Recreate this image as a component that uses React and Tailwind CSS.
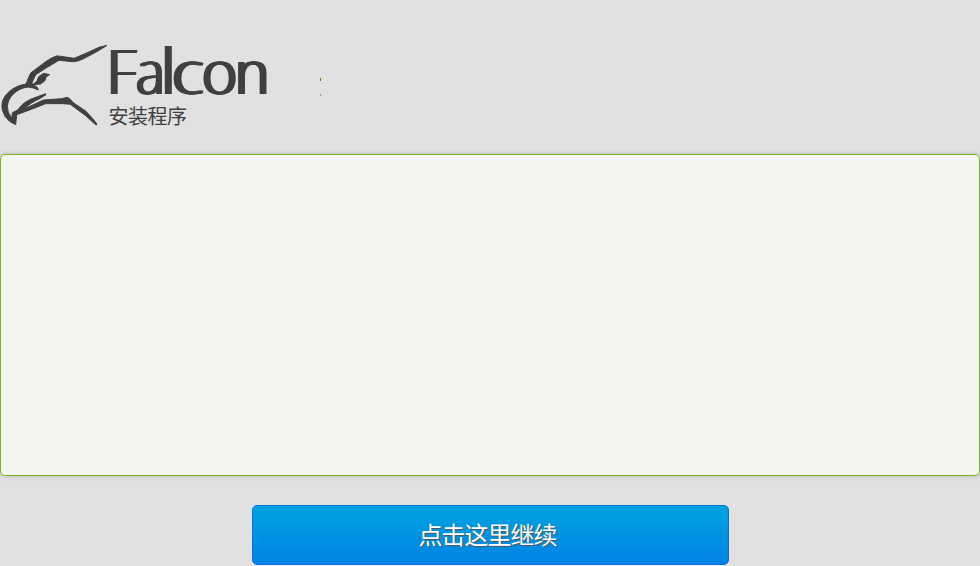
function FalconMark() {
  return (
    <svg viewBox="0 0 420 300" className="h-[100px] w-[108px] shrink-0 overflow-visible" preserveAspectRatio="xMinYMin slice" fill="#404040" stroke="#404040" strokeWidth="3" strokeLinejoin="round" aria-hidden="true">
      <path d="M321 31 L294 48 L249 72 Q231 81 217 80 L177 76 L143 96 L107 119 L95 145 L113 158 L115 165 Q102 158 84 156 C48 161 24 187 22 214 Q21 233 36 249 L37 233 L53 225 Q68 203 91 193 L137 176 L138 179 L119 191 Q88 205 75 221 L130 195 L185 191 L202 187 L209 191 L220 203 L258 229 L281 254 L291 268 L288 270 L257 242 L211 208 L190 206 L137 206 L94 223 L50 239 L47 269 Q27 262 15 244 Q3 222 6 206 C10 179 39 153 78 147 L82 137 L92 114 L108 102 L137 80 Q154 68 169 63 L176 63 L222 70 L253 57 L297 37 Z" />
      <path d="M98 149 L111 138 L116 125 L131 115 L149 119 L139 125 L134 138 L122 147 Z" />
    </svg>
  );
}

function Wordmark() {
  return (
    <h1 className="ml-[-1px] flex h-[60px] whitespace-nowrap font-['Open_Sans','Noto_Sans',sans-serif] text-[60px] leading-[60px] font-light text-[#404040] [text-shadow:1px_0_0_#404040,-1px_0_0_#404040,2px_0_0_#404040,-2px_0_0_#404040]">
      <span className="w-[28.5px] origin-left scale-x-[.96]">F</span>
      <span className="w-[26px] origin-left scale-x-[.9]">a</span>
      <span className="w-[10.5px] origin-[0_53px] scale-y-[1.03]">l</span>
      <span className="w-[30px] origin-left scale-x-[1.1]">c</span>
      <span className="w-[32.5px]">o</span>
      <span className="origin-left scale-x-[.97]">n</span>
    </h1>
  );
}

export default function App() {
  return (
    <main className="flex h-[566px] w-[980px] flex-col overflow-hidden bg-[#e1e1e1] font-['Liberation_Sans','Noto_Sans_CJK_SC',sans-serif]">
      <header className="flex h-[154px] shrink-0 pt-[35px]">
        <FalconMark />
        <div className="w-[212px] pt-[6px]">
          <Wordmark />
          <p className="ml-[0.5px] whitespace-nowrap pt-px text-[20px] leading-[30px] tracking-[-0.5px] text-[#404040]">安装程序</p>
        </div>
        <div className="flex flex-col gap-[13px] pt-[43px]">
          <span className="h-[3px] w-px bg-[#438b05]" />
          <span className="h-[2px] w-px bg-[#94a85b]" />
        </div>
      </header>
      <section className="h-[322px] shrink-0 rounded-[5px] border border-[#79b51c] bg-[#f3f5f0] shadow-[0_0_5px_rgba(0,0,0,0.2)]" />
      <button className="mx-auto mt-[29px] h-[60px] w-[477px] shrink-0 rounded-[5px] border border-[#0870d8] bg-linear-to-b from-[#00a3df] to-[#0082e4] pt-px pr-[5px] text-[24px] leading-[57px] tracking-[-1px] text-white shadow-[0_1px_1px_#eeeeee] [text-shadow:1px_1px_1px_#555555]">
        点击这里继续
      </button>
    </main>
  );
}
